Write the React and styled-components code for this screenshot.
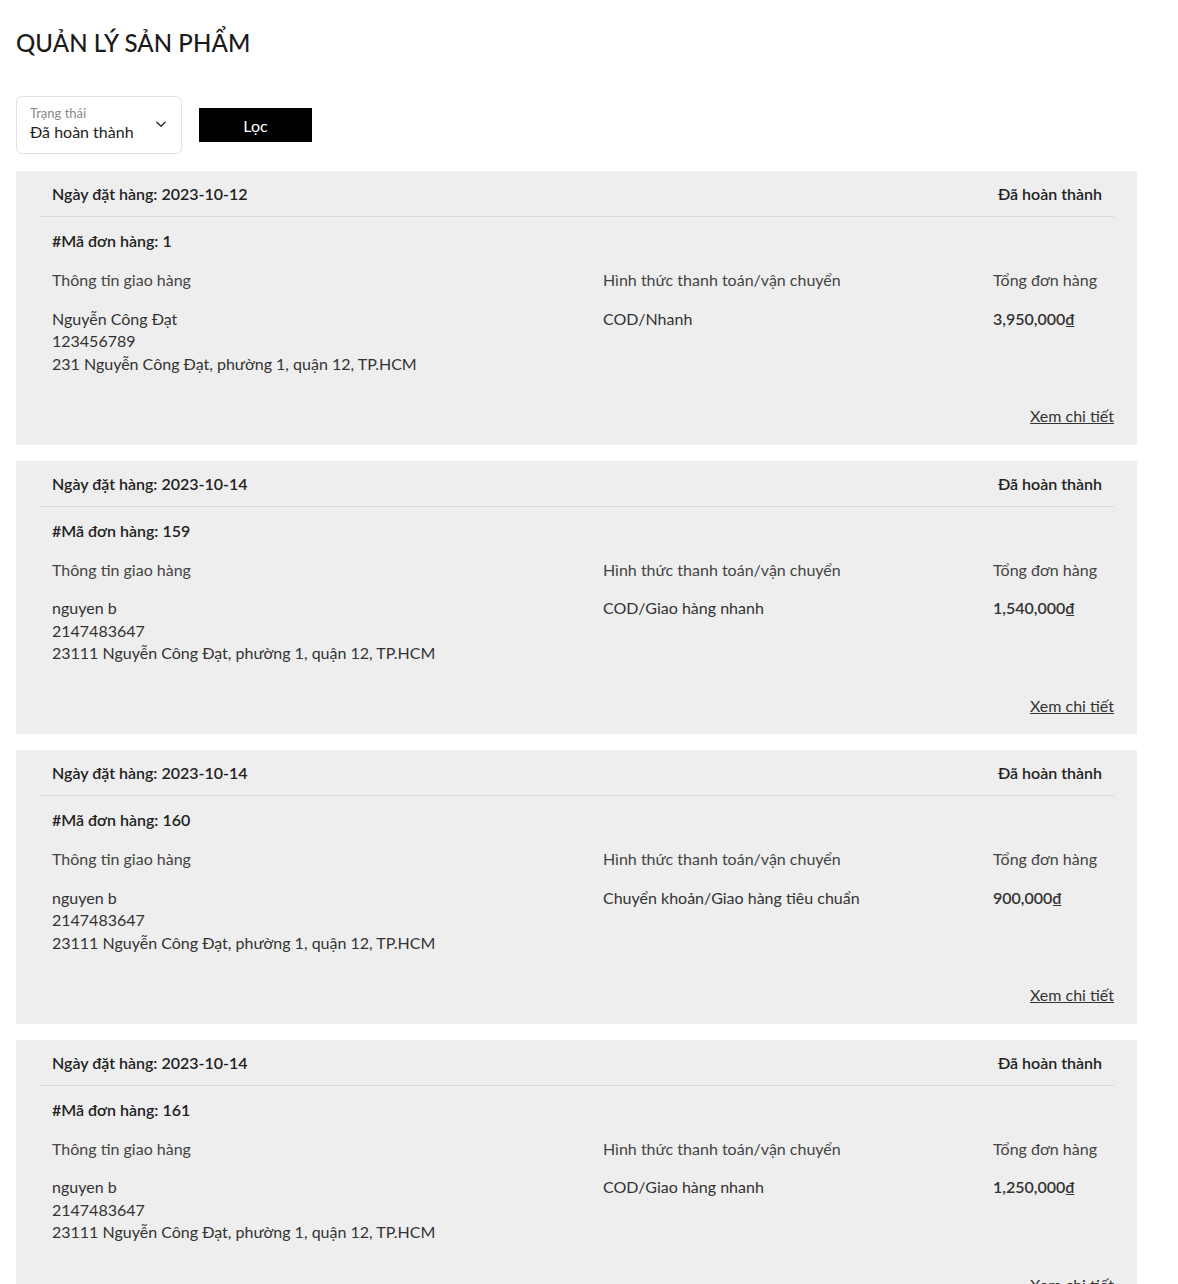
import React from 'react';
import styled, { createGlobalStyle } from 'styled-components';

const GlobalStyle = createGlobalStyle`
  body {
    margin: 0;
    background: #fff;
    font-family: 'Lato', 'Noto Sans', sans-serif;
    color: #222;
  }
`;

const Page = styled.div`
  padding: 0 16px 40px 16px;
`;

const Title = styled.h1`
  font-size: 24px;
  line-height: 32px;
  font-weight: 500;
  margin: 27px 0 37px 0;
  color: #1a1a1a;
  letter-spacing: 0.1px;
`;

const FilterBar = styled.div`
  display: flex;
  align-items: center;
  gap: 17px;
  margin-bottom: 17px;
`;

const SelectBox = styled.div`
  box-sizing: border-box;
  width: 166px;
  height: 58px;
  border: 1px solid #e2e2e2;
  border-radius: 6px;
  padding: 0 13px 2px 13px;
  display: flex;
  align-items: center;
  justify-content: space-between;
`;

const SelectText = styled.div`
  display: flex;
  flex-direction: column;
`;

const SelectLabel = styled.span`
  font-size: 13px;
  line-height: 16px;
  color: #8a8a8a;
`;

const SelectValue = styled.span`
  font-size: 16px;
  line-height: 22px;
  color: #222;
`;

const FilterButton = styled.button`
  width: 113px;
  height: 34px;
  background: #000;
  color: #fff;
  border: none;
  font-family: inherit;
  font-size: 16px;
  cursor: pointer;
`;

const List = styled.div`
  display: flex;
  flex-direction: column;
  gap: 16px;
`;

const Card = styled.div`
  width: 1121px;
  box-sizing: border-box;
  background: #eeeeee;
  padding: 0 23px 17.5px 24px;
`;

const CardHeader = styled.div`
  height: 46px;
  box-sizing: border-box;
  padding: 0 12px;
  display: flex;
  align-items: center;
  justify-content: space-between;
  border-bottom: 1px solid #d9d9d9;
  font-size: 16px;
  font-weight: 600;
  color: #222;
`;

const CardBody = styled.div`
  padding: 0 0 0 12px;
`;

const OrderId = styled.div`
  margin-top: 13px;
  font-size: 16px;
  line-height: 22px;
  font-weight: 600;
  color: #222;
`;

const InfoGrid = styled.div`
  margin-top: 17px;
  display: grid;
  grid-template-columns: 551px 390px 1fr;
  row-gap: 16px;
  font-size: 16px;
  line-height: 22.5px;
`;

const Label = styled.div`
  color: #444;
`;

const Value = styled.div`
  color: #333;
  font-weight: ${({ $bold }) => ($bold ? 600 : 400)};
`;

const Footer = styled.div`
  display: flex;
  justify-content: flex-end;
  margin-top: 30px;
`;

const DetailLink = styled.a`
  font-size: 16px;
  line-height: 22px;
  color: #333;
  text-decoration: underline;
  cursor: pointer;
`;

const Chevron = () => (
  <svg width="14" height="14" viewBox="0 0 24 24" fill="none" stroke="#333" strokeWidth="2.5" strokeLinecap="round" strokeLinejoin="round">
    <polyline points="5 9 12 16 19 9" />
  </svg>
);

const orders = [
  {
    date: '2023-10-12',
    id: 1,
    name: 'Nguyễn Công Đạt',
    phone: '123456789',
    address: '231 Nguyễn Công Đạt, phường 1, quận 12, TP.HCM',
    method: 'COD/Nhanh',
    total: '3,950,000₫',
  },
  {
    date: '2023-10-14',
    id: 159,
    name: 'nguyen b',
    phone: '2147483647',
    address: '23111 Nguyễn Công Đạt, phường 1, quận 12, TP.HCM',
    method: 'COD/Giao hàng nhanh',
    total: '1,540,000₫',
  },
  {
    date: '2023-10-14',
    id: 160,
    name: 'nguyen b',
    phone: '2147483647',
    address: '23111 Nguyễn Công Đạt, phường 1, quận 12, TP.HCM',
    method: 'Chuyển khoản/Giao hàng tiêu chuẩn',
    total: '900,000₫',
  },
  {
    date: '2023-10-14',
    id: 161,
    name: 'nguyen b',
    phone: '2147483647',
    address: '23111 Nguyễn Công Đạt, phường 1, quận 12, TP.HCM',
    method: 'COD/Giao hàng nhanh',
    total: '1,250,000₫',
  },
];

const OrderCard = ({ order }) => (
  <Card>
    <CardHeader>
      <span>Ngày đặt hàng: {order.date}</span>
      <span>Đã hoàn thành</span>
    </CardHeader>
    <CardBody>
      <OrderId>#Mã đơn hàng: {order.id}</OrderId>
      <InfoGrid>
        <Label>Thông tin giao hàng</Label>
        <Label>Hình thức thanh toán/vận chuyển</Label>
        <Label>Tổng đơn hàng</Label>
        <Value>
          {order.name}
          <br />
          {order.phone}
          <br />
          {order.address}
        </Value>
        <Value>{order.method}</Value>
        <Value $bold>{order.total}</Value>
      </InfoGrid>
      <Footer>
        <DetailLink>Xem chi tiết</DetailLink>
      </Footer>
    </CardBody>
  </Card>
);

export default function App() {
  return (
    <Page>
      <GlobalStyle />
      <Title>QUẢN LÝ SẢN PHẨM</Title>
      <FilterBar>
        <SelectBox>
          <SelectText>
            <SelectLabel>Trạng thái</SelectLabel>
            <SelectValue>Đã hoàn thành</SelectValue>
          </SelectText>
          <Chevron />
        </SelectBox>
        <FilterButton>Lọc</FilterButton>
      </FilterBar>
      <List>
        {orders.map((o) => (
          <OrderCard key={o.id} order={o} />
        ))}
      </List>
    </Page>
  );
}
